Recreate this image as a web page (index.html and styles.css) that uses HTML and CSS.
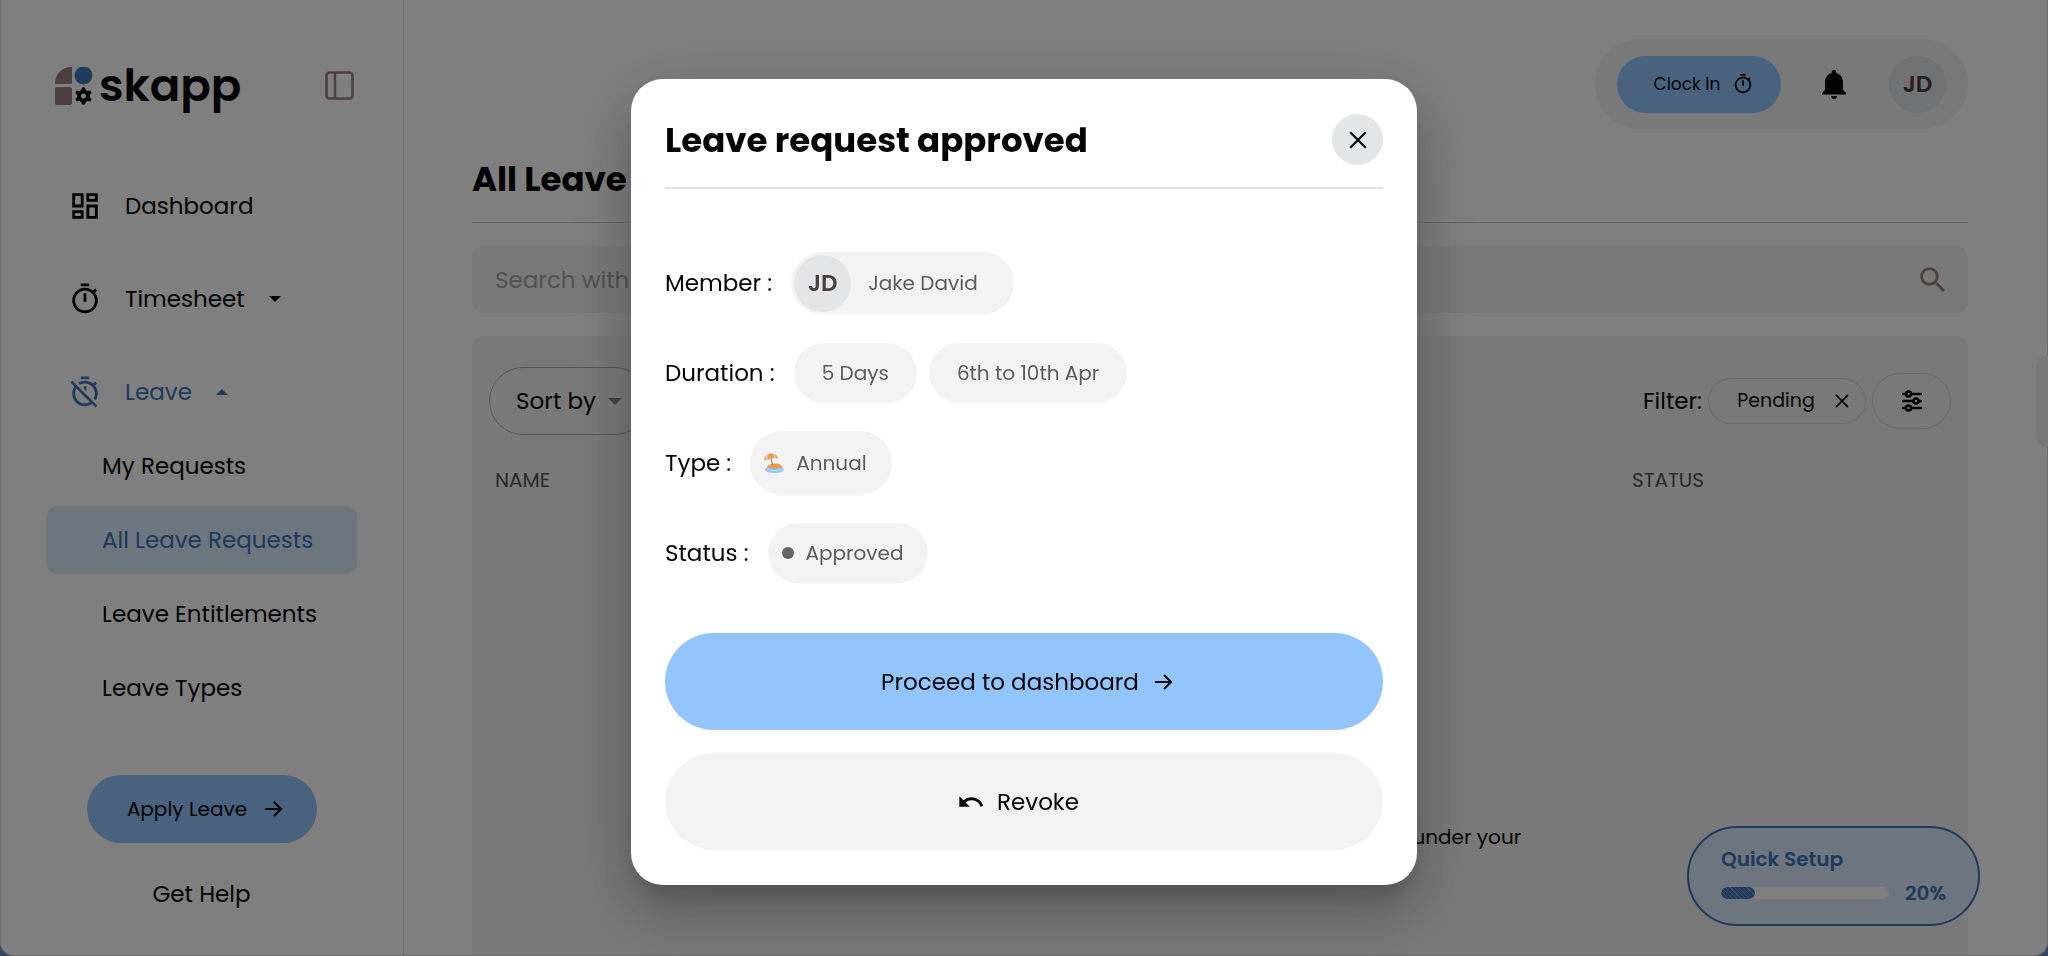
FILE: index.html
```html
<!DOCTYPE html>
<html lang="en">
<head>
<meta charset="utf-8">
<title>Skapp - All Leave Requests</title>
<link rel="stylesheet" href="styles.css">
</head>
<body>
<svg class="defs" aria-hidden="true">
  <symbol id="timer" viewBox="0 0 24 24"><path d="M15 1H9v2h6V1zm-4 13h2V8h-2v6zm8.03-6.61l1.42-1.42c-.43-.51-.9-.99-1.41-1.41l-1.42 1.42C16.07 4.74 14.12 4 12 4c-4.97 0-9 4.03-9 9s4.02 9 9 9 9-4.03 9-9c0-2.12-.74-4.07-1.97-5.61zM12 20c-3.87 0-7-3.13-7-7s3.13-7 7-7 7 3.13 7 7-3.13 7-7 7z"/></symbol>
  <symbol id="arrow" viewBox="0 0 20 20"><path d="M2 10h16M11 3l7 7-7 7" fill="none" stroke="currentColor" stroke-width="2"/></symbol>
  <symbol id="cross" viewBox="0 0 20 20"><path d="M2 2l16 16M18 2L2 18" fill="none" stroke="currentColor" stroke-width="2.4" stroke-linecap="round"/></symbol>
  <symbol id="caret" viewBox="0 0 12 6"><path d="M0 0h12L6 6z"/></symbol>
</svg>
<div class="app">
  <aside class="sidebar">
    <div class="brand">
      <a class="logo" href="#">
        <svg width="38" height="38" viewBox="0 0 38 38">
          <path fill="#9a8280" d="M0 17V16A16 16 0 0 1 16 0h1v17z"/>
          <circle cx="28.500" cy="8.500" r="9" fill="#4074b8"/>
          <rect y="20" width="17" height="18" rx="2" fill="#9a8280"/>
          <g class="line" stroke="#050505" stroke-linecap="round"><circle cx="28.500" cy="29" r="4.500" stroke-width="4"/><path stroke-width="4" d="M28.500 22.200v1M28.500 35.800v-1M22.600 25.600l1 .6M34.400 32.400l-1-.6M22.600 32.400l1-.6M34.400 25.600l-1 .6"/></g>
        </svg>
        <span>skapp</span>
      </a>
      <button class="plain" type="button" aria-label="Collapse sidebar">
        <svg class="line" width="30" height="30" viewBox="0 0 30 30" stroke="#9a8280" stroke-width="2.600"><rect x="1.500" y="1.500" width="26" height="26" rx="3"/><path d="M10 2v26"/></svg>
      </button>
    </div>
    <nav class="nav">
      <a class="item" href="#"><svg class="i34" viewBox="0 0 24 24"><path d="M19 5v2h-4V5h4M9 5v6H5V5h4m10 8v6h-4v-6h4M9 17v2H5v-2h4M21 3h-8v6h8V3zM11 3H3v10h8V3zm10 8h-8v10h8V11zm-10 4H3v6h8v-6z"/></svg>Dashboard</a>
      <a class="item" href="#"><svg class="i34"><use href="#timer"/></svg>Timesheet<svg class="caret"><use href="#caret"/></svg></a>
      <a class="item blue" href="#"><svg class="i34" viewBox="0 0 24 24"><path d="m19.040 4.550-1.420 1.420C16.070 4.740 14.120 4 12 4c-1.830 0-3.530.55-4.950 1.480l1.460 1.460C9.530 6.350 10.730 6 12 6c3.870 0 7 3.130 7 7 0 1.270-.35 2.470-.94 3.490l1.450 1.450C20.450 16.530 21 14.830 21 13c0-2.120-.74-4.070-1.970-5.610l1.420-1.420-1.410-1.420zM15 1H9v2h6V1zm-4 8.440 2 2V8h-2v1.440zM3.020 4 1.750 5.270 4.500 8.030C3.550 9.450 3 11.160 3 13c0 4.970 4.020 9 9 9 1.840 0 3.550-.55 4.980-1.500l2.500 2.500 1.270-1.270-7.710-7.710L3.020 4zM12 20c-3.870 0-7-3.130-7-7 0-1.280.35-2.480.95-3.520l9.560 9.560c-1.030.61-2.230.96-3.510.96z"/></svg>Leave<svg class="caret up"><use href="#caret"/></svg></a>
      <div class="sub">
        <a href="#">My Requests</a>
        <a class="current" href="#" aria-current="page">All Leave Requests</a>
        <a href="#">Leave Entitlements</a>
        <a href="#">Leave Types</a>
      </div>
    </nav>
    <button class="apply" type="button">Apply Leave<svg class="i20"><use href="#arrow"/></svg></button>
    <a class="help" href="#">Get Help</a>
  </aside>
  <main class="main">
    <header class="top">
      <div class="tools">
        <button class="clock" type="button">Clock In<svg class="i22"><use href="#timer"/></svg></button>
        <button class="plain" type="button" aria-label="Notifications"><svg class="i36" viewBox="0 0 24 24"><path d="M12 22c1.100 0 2-.9 2-2h-4c0 1.100.89 2 2 2zm6-6v-5c0-3.070-1.640-5.640-4.500-6.320V4c0-.83-.67-1.500-1.500-1.500s-1.500.67-1.500 1.500v.68C7.630 5.360 6 7.920 6 11v5l-2 2v1h16v-1l-2-2z"/></svg></button>
        <span class="avatar">JD</span>
      </div>
    </header>
    <h1>All Leave Requests</h1>
    <label class="search">
      <input type="text" aria-label="Search" placeholder="Search with a team member name">
      <svg class="i34" viewBox="0 0 24 24"><path d="M15.500 14h-.79l-.28-.27C15.410 12.590 16 11.110 16 9.500 16 5.910 13.090 3 9.500 3S3 5.910 3 9.500 5.910 16 9.500 16c1.610 0 3.090-.59 4.230-1.570l.27.28v.79l5 4.990L20.490 19l-4.990-5zm-6 0C7.010 14 5 11.990 5 9.500S7.010 5 9.500 5 14 7.010 14 9.500 11.990 14 9.500 14z"/></svg>
    </label>
    <section class="panel">
      <div class="bar">
        <button class="sort" type="button">Sort by<svg class="caret"><use href="#caret"/></svg></button>
        <div class="filters">
          <span>Filter:</span>
          <button class="chip" type="button">Pending<svg class="i14"><use href="#cross"/></svg></button>
          <button class="tune" type="button" aria-label="Filter options">
            <svg class="line" width="20" height="22" viewBox="0 0 20 22" stroke="#050505" stroke-width="2.500" stroke-linecap="round"><path d="M1 4h3M9 4h10M1 11h10M17 11h2M1 18h3M9 18h10"/><circle cx="6.500" cy="4" r="2.500"/><circle cx="14" cy="11" r="2.500"/><circle cx="6.500" cy="18" r="2.500"/></svg>
          </button>
        </div>
      </div>
      <table>
        <thead><tr><th class="wide">NAME</th><th class="wide">TYPE</th><th>STATUS</th></tr></thead>
        <tbody><tr><td colspan="3"><p class="empty">There are no leave requests to show from people under your supervision</p></td></tr></tbody>
      </table>
    </section>
  </main>
  <div class="setup">
    <strong>Quick Setup</strong>
    <div class="meter"><div class="track"><div class="fill" style="width:20%"></div></div><strong>20%</strong></div>
  </div>
  <div class="handle"></div>
</div>
<div class="overlay">
  <div class="modal" role="dialog" aria-modal="true" aria-labelledby="modal-title">
    <div class="head">
      <h2 id="modal-title">Leave request approved</h2>
      <button class="close" type="button" aria-label="Close"><svg class="i18"><use href="#cross"/></svg></button>
    </div>
    <dl class="rows">
      <div><dt>Member :</dt><dd class="member"><span class="avatar">JD</span>Jake David</dd></div>
      <div><dt>Duration :</dt><dd>5 Days</dd><dd>6th to 10th Apr</dd></div>
      <div><dt>Type :</dt><dd class="lead type">
        <svg width="20" height="20" viewBox="0 0 20 20"><ellipse cx="10.500" cy="16.500" rx="9.500" ry="3.500" fill="#93c5fd"/><path d="M2.500 15.500c3 2 13 2 16 0-1 2.500-14 3-16 0z" fill="#e9f3fd"/><path d="M3 14.500c1-3 5-4 8.500-4s6.500 1.500 7 4c-4 1.500-11 1.500-15.500 0z" fill="#f2994a"/><path d="M7 5l1.500 7" stroke="#777" stroke-width="1"/><path d="M.5 7.500C-.5 3 4 .5 7 .5s7 1.500 7 5.500c-2-1.500-3-1.500-4.500-.5C7.500 4.500 6 5 4.500 7 3 6 2 6.500.5 7.500z" fill="#f2994a"/><path class="line" d="M4 1.500C2.500 3 2.500 5 3 6.500M10 1c1 1.500 1 3 .5 4.500" stroke="#cfd1d3" stroke-width="1.600"/></svg>Annual</dd></div>
      <div><dt>Status :</dt><dd class="lead"><i class="dot"></i>Approved</dd></div>
    </dl>
    <div class="actions">
      <button class="primary" type="button">Proceed to dashboard<svg class="i20"><use href="#arrow"/></svg></button>
      <button class="revoke" type="button"><svg class="i28" viewBox="0 0 24 24"><path d="M12.500 8c-2.650 0-5.050.99-6.900 2.600L2 7v9h9l-3.620-3.620c1.390-1.160 3.160-1.880 5.120-1.880 3.540 0 6.550 2.310 7.600 5.500l2.370-.78C21.080 11.030 17.150 8 12.500 8z"/></svg>Revoke</button>
    </div>
  </div>
</div>
</body>
</html>
```
FILE: styles.css
```css
* { box-sizing: border-box; }
body {
  margin: 0;
  font-family: Poppins, Inter, "Open Sans", sans-serif;
  font-size: 23px;
  line-height: 34px;
  color: #050505;
  background: #6d8fbb;
  overflow: hidden;
}
a { color: inherit; text-decoration: none; }
button { font: inherit; color: inherit; border: 0; margin: 0; padding: 0; background: none; display: flex; align-items: center; justify-content: center; }
svg { fill: currentColor; flex: none; display: block; }
.line { fill: none; }
.defs { position: absolute; width: 0; height: 0; }
.i14 { width: 14px; height: 14px; }
.i18 { width: 18px; height: 18px; }
.i20 { width: 20px; height: 20px; }
.i22 { width: 22px; height: 22px; }
.i28 { width: 28px; height: 28px; }
.i34 { width: 34px; height: 34px; }
.i36 { width: 36px; height: 36px; }
.caret { width: 12px; height: 6px; }
.up { transform: rotate(180deg); }
.blue { color: #3f74b5; }

.app {
  display: flex;
  height: 100vh;
  overflow: hidden;
  background: #fff;
  border: 1px solid #dcdcdc;
  border-top: 0;
  border-radius: 0 0 14px 14px;
}
.sidebar {
  width: 403px;
  flex: none;
  display: flex;
  flex-direction: column;
  padding: 56px 46px 0 45px;
  border-right: 1px solid #dcdcdc;
}
.brand { display: flex; align-items: center; justify-content: space-between; padding: 0 2px 0 9px; height: 60px; }
.logo { display: flex; align-items: center; gap: 6px; font-size: 45px; font-weight: 600; line-height: 60px; }
.nav { display: flex; flex-direction: column; gap: 25px; padding-top: 56px; }
.item { display: flex; align-items: center; height: 68px; padding-left: 22px; }
.item .i34 { margin-right: 23px; }
.item .caret { margin-left: 24px; }
.sub { display: flex; flex-direction: column; gap: 6px; margin-top: -19px; }
.sub a { height: 68px; line-height: 68px; padding-left: 56px; border-radius: 12px; }
.sub .current { background: #dbeafe; color: #3f74b5; }
.apply { align-self: center; width: 230px; height: 68px; margin-top: 53px; padding-left: 7px; gap: 16px; border-radius: 34px; background: #93c5fd; font-size: 20px; }
.help { align-self: center; margin-top: 34px; }

.main { flex: 1; min-width: 0; display: flex; flex-direction: column; padding: 39px 79px 0 68px; }
.top { display: flex; justify-content: flex-end; }
.tools { display: flex; align-items: center; height: 90px; padding: 0 22px; border-radius: 45px; background: #f3f3f3; }
.clock { width: 164px; height: 57px; margin-right: 35px; padding-left: 10px; gap: 12px; border-radius: 29px; background: #93c5fd; font-size: 17px; }
.avatar { display: grid; place-items: center; width: 57px; height: 57px; border-radius: 50%; background: #e3e5e7; color: #4a403f; font-size: 23px; font-weight: 600; }
.tools .avatar { margin-left: 37px; }
h1, h2 { margin: 0; font-size: 34px; line-height: 50px; font-weight: 700; }
h1 { padding: 25px 0 18px; border-bottom: 1px solid #ccc; }
.search { display: flex; align-items: center; height: 67px; flex: none; margin: 23px 0; padding: 0 18px 0 23px; border-radius: 12px; background: #f3f3f3; color: #9a8280; }
.search input { flex: 1; border: 0; background: none; font: inherit; padding: 0; outline: 0; }
.search input::placeholder { color: #a8a3a3; opacity: 1; }
.panel { flex: 1; border-radius: 12px 12px 0 0; background: #f3f3f3; padding-top: 31px; }
.bar { display: flex; align-items: center; justify-content: space-between; padding: 0 17px; }
.sort { width: 160px; height: 68px; gap: 12px; border: 1px solid #aaa; border-radius: 34px; }
.sort .caret { width: 14px; height: 7px; color: #9a8280; }
.filters { display: flex; align-items: center; gap: 6px; }
.chip { width: 158px; height: 46px; gap: 20px; padding-left: 12px; border: 1px solid #d4d4d4; border-radius: 23px; font-size: 19px; }
.tune { width: 79px; height: 56px; border: 1px solid #d4d4d4; border-radius: 28px; }
table { width: 100%; margin-top: 28px; border-collapse: collapse; table-layout: fixed; }
th { padding: 0 23px; text-align: left; font-size: 20px; font-weight: 400; color: #555; }
.wide { width: 38%; }
td { padding: 323px 0 0; }
.empty { width: 640px; margin: 0 auto; text-align: center; font-size: 20px; }

.setup { position: absolute; right: 68px; bottom: 30px; width: 293px; height: 100px; padding: 14px 32px; border: 2px solid #3f74b5; border-radius: 50px; background: #dbeafe; color: #3f74b5; font-size: 20px; }
.setup strong { display: block; font-weight: 600; }
.meter { display: flex; align-items: center; justify-content: space-between; }
.track { width: 168px; height: 12px; border-radius: 6px; background: #fff; overflow: hidden; }
.fill { height: 100%; border-radius: 6px; background: repeating-linear-gradient(45deg, #3f74b5 0 2px, #6f9bd0 2px 3px); }
.handle { position: absolute; right: 0; top: 355px; width: 12px; height: 92px; border-radius: 12px 0 0 12px; background: #f0f0f0; box-shadow: 0 0 36px rgba(0, 0, 0, .06); }

.overlay { position: fixed; inset: 0; display: flex; align-items: center; justify-content: center; padding-top: 8px; background: rgba(0, 0, 0, .5); }
.modal {
  width: 786px;
  padding: 35px 34px;
  border-radius: 32px;
  background: #fff;
  box-shadow: 0 16px 21px -10px rgba(0, 0, 0, .2), 0 34px 54px 4px rgba(0, 0, 0, .14), 0 13px 65px 11px rgba(0, 0, 0, .12);
}
.head { display: flex; align-items: center; justify-content: space-between; padding-bottom: 22px; border-bottom: 2px solid #e4e5e7; }
.close { width: 51px; height: 51px; border-radius: 50%; background: #e3e5e7; }
.rows { display: grid; grid-auto-rows: 90px; margin: 49px 0 35px; }
.rows > div { display: flex; align-items: center; }
dt { margin-right: 19px; }
dd { display: flex; align-items: center; height: 60px; margin: 0 12px 0 0; padding: 0 28px; border-radius: 32px; background: #f3f3f3; color: #5c5c5c; font-size: 20px; }
dd.member { height: 62px; gap: 17px; padding: 0 36px 0 3px; }
dd.lead { gap: 12px; padding: 0 25px 0 14px; }
dd.type { height: 64px; }
.dot { width: 12px; height: 12px; border-radius: 50%; background: #666; }
.actions { display: grid; gap: 23px; }
.actions button { height: 97px; gap: 14px; border-radius: 49px; background: #f3f3f3; }
.actions .primary { padding-left: 6px; background: #93c5fd; }
.actions .revoke { gap: 12px; padding-right: 12px; }
```
